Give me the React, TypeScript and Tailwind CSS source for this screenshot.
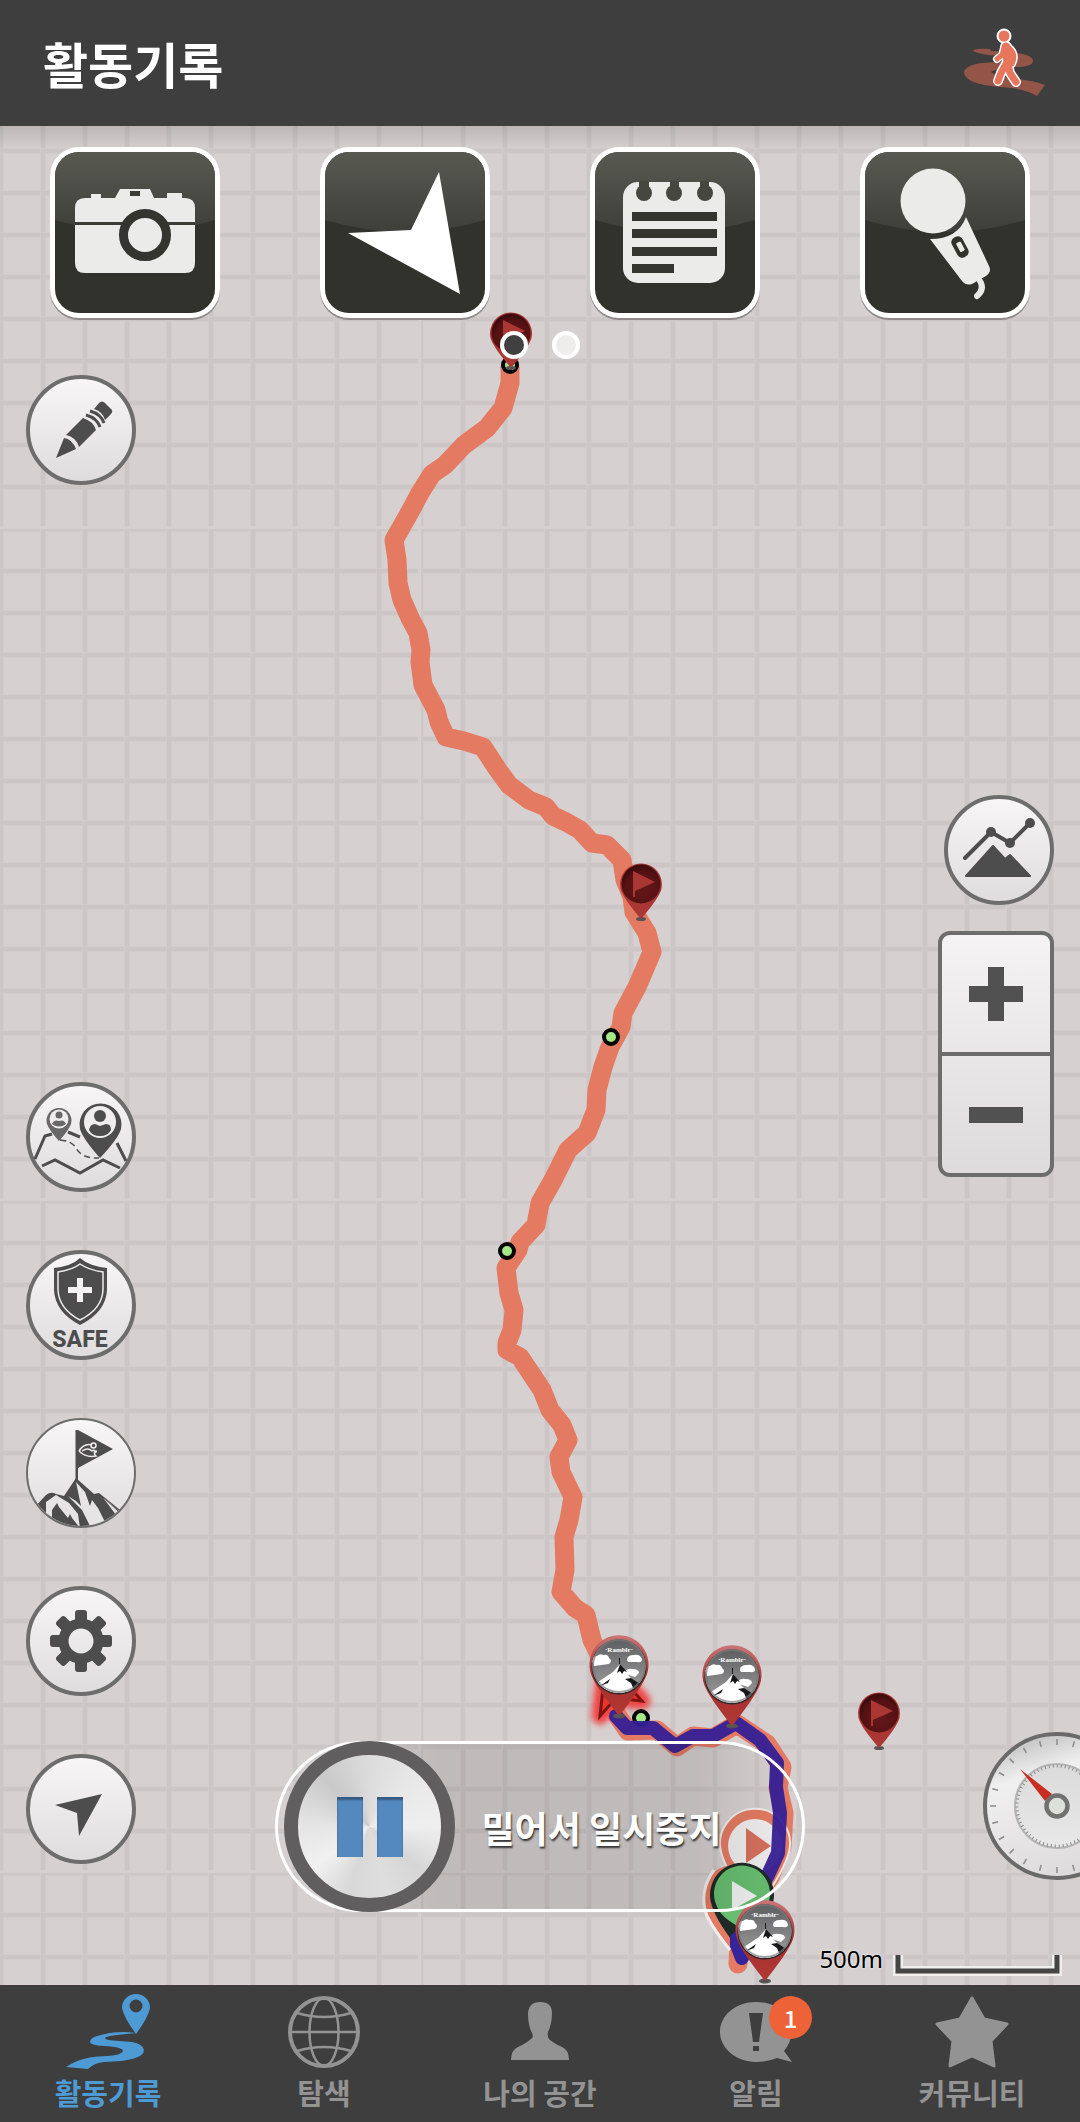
import React from "react";

const ROUTE =
  "M510 367L510 383L503 408L487 428L464 445L445 465L432 474L420 493L411 510L394 540L397 560L398 583L402 600L411 620L418 633L421 650L420 662L423 685L436 710L439 722L446 737L464 741L483 747L498 770L509 785L529 800L546 807L553 816L566 822L580 830L592 843L607 845L622 860L625 880L632 897L634 912L647 933L652 952L637 987L623 1013L621 1027L610 1047L603 1067L597 1090L596 1110L587 1133L568 1150L553 1180L540 1203L536 1225L520 1242L518 1250L506 1268L509 1293L514 1310L512 1330L507 1343L507 1350L520 1357L542 1390L550 1410L562 1425L568 1440L559 1457L561 1472L573 1497L569 1520L564 1537L565 1570L561 1592L575 1608L586 1615L592 1640L606 1668L617 1715L628 1731L657 1730L677 1747L693 1736L713 1738L737 1724L767 1744L782 1767L778 1788L784 1813L782 1847L770 1877L740 1920L738 1964";

const WALKED =
  "M616 1716L627 1728L653 1728L675 1746L693 1736L713 1736L736 1723L760 1740L777 1763L776 1787L780 1813L778 1853L767 1877L737 1925L737 1945L742 1958";

const FlagPin = ({ x, y }: { x: number; y: number }) => (
  <g transform={`translate(${x} ${y})`}>
    <ellipse cx="0" cy="35" rx="5" ry="2" fill="#555" />
    <path d="M-20.500 5A21 21 0 1 1 20.500 5Q18 14 0 35Q-18 14-20.500 5Z" fill="#aa3733" />
    <circle r="19.500" fill="url(#flagHead)" />
    <path d="M-8-13L14-2L-6 7V13H-8Z" fill="#ab3734" />
  </g>
);

const PhotoPin = ({ x, y }: { x: number; y: number }) => (
  <g transform={`translate(${x} ${y})`}>
    <ellipse cx="0" cy="50" rx="6" ry="2.500" fill="#555" />
    <path d="M-28 8A29.500 29.500 0 1 1 28 8Q24 20 0 50Q-24 20-28 8Z" fill="url(#photoBody)" />
    <circle cy="1" r="27.500" fill="#2e2526" />
    <g clipPath="url(#photoClip)">
      <circle r="27" fill="url(#photoSky)" />
      <path d="M-27-5q0-5 5-5q3-3 6-1q5-1 6 3q4 3 0 6l-15 2zM8-6q0-5 7-5q6-1 8 4q0 4-5 3h-9zM4 7q4-5 9-4q7 0 7 4l-4 4z" fill="#fff" />
      <path d="M-24 18L-6 6L1-2L8 8L14 14L28 28H-24z" fill="#fff" />
      <path d="M1-2L8 6L5 5L3 8L1 5L-2 7zM6 13L12 12L24 20L27 28H20L15 24L12 17zM-19 20L-9 13L-11 17zM0-8H1V-2H0z" fill="#16171a" />
      <circle r="26" fill="none" stroke="#777" strokeOpacity=".7" strokeWidth="2" />
    </g>
    <text y="-14" textAnchor="middle" fontSize="7" fill="#fff" className="font-['Liberation_Serif',serif] font-bold">
      ·Ramblr·
    </text>
  </g>
);

const Waypoint = ({ x, y }: { x: number; y: number }) => (
  <circle cx={x} cy={y} r="7" fill="#a4e887" stroke="#000" strokeWidth="4" />
);

const MapCanvas = () => (
  <svg
    viewBox="0 126 1080 1859"
    preserveAspectRatio="xMidYMid slice"
    className="absolute inset-0 h-full w-full"
    aria-hidden="true"
  >
    <defs>
      <pattern id="grid" x="40" y="148" width="42" height="42" patternUnits="userSpaceOnUse">
        <path d="M0 0H42V6H6V42H0z" fill="#d2cccc" />
        <path d="M1 1H42V5H5V42H1z" fill="#ccc6c6" />
      </pattern>
      <linearGradient id="topShade" x1="0" y1="0" x2="0" y2="1">
        <stop offset="0" stopColor="#000" stopOpacity=".12" />
        <stop offset="1" stopColor="#000" stopOpacity="0" />
      </linearGradient>
      <radialGradient id="flagHead" cx=".55" cy=".65" r=".65">
        <stop offset="0" stopColor="#641618" />
        <stop offset=".7" stopColor="#551213" />
        <stop offset="1" stopColor="#380a0b" />
      </radialGradient>
      <linearGradient id="photoBody" x1="0" y1="0" x2="0" y2="1">
        <stop offset="0" stopColor="#ca7575" />
        <stop offset=".5" stopColor="#a52f30" />
        <stop offset="1" stopColor="#b13934" />
      </linearGradient>
      <linearGradient id="photoSky" x1="0" y1="0" x2="0" y2="1">
        <stop offset="0" stopColor="#5d5e60" />
        <stop offset="1" stopColor="#a0a0a0" />
      </linearGradient>
      <clipPath id="photoClip">
        <circle r="27" />
      </clipPath>
      <filter id="glow" x="-50%" y="-50%" width="200%" height="200%">
        <feGaussianBlur stdDeviation="3" />
      </filter>
    </defs>
    <rect y="126" width="1080" height="1859" fill="#d6d0d0" />
    <rect y="126" width="1080" height="1859" fill="url(#grid)" />
    {/* tile seams, where the grid line is only half drawn */}
    <path d="M418 126h3v1859h-3zM0 526h1080v3H0zM0 1198h1080v3H0zM0 1870h1080v3H0z" fill="#d6d0d0" />
    <rect y="126" width="1080" height="24" fill="url(#topShade)" />

    <path d={ROUTE} fill="none" stroke="#e37a61" strokeWidth="19" strokeLinejoin="round" strokeLinecap="round" />
    <Waypoint x={510} y={365} />
    <Waypoint x={611} y={1037} />
    <Waypoint x={507} y={1251} />

    <path d="M606 1660L600 1716L616 1698L642 1701z" fill="#f04444" stroke="#f04444" strokeWidth="17" strokeLinejoin="round" filter="url(#glow)" />
    <path d="M606 1660L600 1716L616 1698L642 1701z" fill="#ea3426" stroke="#7c1512" strokeWidth="3" />
    <Waypoint x={641} y={1718} />

    <path d="M721 1852A35 35 0 1 1 789 1852Q784 1872 755 1912Q726 1872 721 1852Z" fill="#e37a61" stroke="#f0eaea" strokeWidth="2" />
    <circle cx="755" cy="1846" r="27" fill="#eeecec" />
    <path d="M746 1828L771 1846L746 1863z" fill="#d4705c" />
    <path d="M704 1895Q704 1866 742 1863L752 1940L738 1960L731 1950Q704 1920 704 1898Z" fill="#e37a61" />
    <path d="M714 1870Q698 1892 707 1916Q714 1930 730 1950" fill="none" stroke="#f3eded" strokeWidth="3" />
    <path d={WALKED} fill="none" stroke="#352096" strokeOpacity=".95" strokeWidth="14" strokeLinejoin="round" strokeLinecap="round" />
    <path d="M712 1906A32 32 0 1 1 772 1906Q766 1923 742 1953Q717 1923 712 1906Z" fill="#1e2a26" />
    <path d="M716 1904A28 28 0 1 1 768 1904Q763 1918 742 1928Q720 1918 716 1904Z" fill="#67bd70" />
    <path d="M732 1920L754 1920L742 1934z" fill="#67bd70" />
    <path d="M732 1881L757 1896L732 1910z" fill="#f0f0f0" />
    <path d="M737 1938L739 1948L742 1958" fill="none" stroke="#34259a" strokeWidth="13" strokeLinecap="round" />

    <FlagPin x={511} y={333} />
    <FlagPin x={641} y={884} />
    <FlagPin x={879} y={1713} />
    <PhotoPin x={619} y={1666} />
    <PhotoPin x={732} y={1676} />
    <PhotoPin x={765} y={1931} />
  </svg>
);

const ToolButton = ({ label, children }: { label: string; children: React.ReactNode }) => (
  <button type="button" aria-label={label} className="rounded-[26px] drop-shadow-[0_2px_0_#8f8a8a]">
    <svg viewBox="0 0 170 171" className="h-[171px] w-[170px]">
      <defs>
        <linearGradient id="gloss" x1="0" y1="0" x2="0" y2="1">
          <stop offset="0" stopColor="#585a52" />
          <stop offset="1" stopColor="#3e3f38" />
        </linearGradient>
      </defs>
      <rect width="170" height="171" rx="29" fill="#fff" />
      <rect x="5" y="5" width="160" height="161" rx="24" fill="#31322b" />
      <path d="M5 29A24 24 0 0 1 29 5H141A24 24 0 0 1 165 29V73Q85 97 5 73z" fill="url(#gloss)" />
      {children}
    </svg>
  </button>
);

const RoundButton = ({
  label,
  thin,
  children,
}: {
  label: string;
  thin?: boolean;
  children: React.ReactNode;
}) => (
  <button type="button" aria-label={label}>
    <svg viewBox="0 0 110 110" className="size-[110px]" fill="#4d4d4d">
      <defs>
        <linearGradient id="face" x1="0" y1="0" x2="0" y2="1">
          <stop offset="0" stopColor="#f8f6f7" />
          <stop offset="1" stopColor="#dedcdd" />
        </linearGradient>
        <clipPath id="faceClip">
          <circle cx="55" cy="55" r="53" />
        </clipPath>
      </defs>
      <circle cx="55" cy="55" r={thin ? 54 : 53} fill="url(#face)" stroke="#6e6d6d" strokeWidth={thin ? 2 : 4} />
      {children}
    </svg>
  </button>
);

const Gauge = () => (
  <svg viewBox="0 0 148 148" className="size-[148px]" aria-label="나침반">
    <defs>
      <linearGradient id="dial" x1=".2" y1="0" x2=".5" y2="1">
        <stop offset="0" stopColor="#bcbbbc" />
        <stop offset=".3" stopColor="#f1f0f1" />
        <stop offset="1" stopColor="#dddbdc" />
      </linearGradient>
      <linearGradient id="innerDial" x1="0" y1="0" x2="0" y2="1">
        <stop offset="0" stopColor="#dcdbdc" />
        <stop offset="1" stopColor="#e9e8e8" />
      </linearGradient>
    </defs>
    <circle cx="74" cy="74" r="72" fill="url(#dial)" stroke="#6a6a6a" strokeWidth="4" />
    {Array.from({ length: 24 }, (_, i) => (
      <path key={i} d="M74 7V13" stroke="#8c8c8c" strokeWidth="1.500" transform={`rotate(${i * 15} 74 74)`} />
    ))}
    <circle cx="74" cy="74" r="42" fill="url(#innerDial)" stroke="#b5b5b5" strokeWidth="2" />
    <circle cx="74" cy="74" r="40" fill="none" stroke="#888" strokeWidth="3" strokeDasharray="1 3" />
    <path d="M37 37L69 62L62 69z" fill="#c92c20" />
    <circle cx="74" cy="74" r="10.500" fill="#dde0da" stroke="#707170" strokeWidth="4.500" />
  </svg>
);

const NavItem = ({
  label,
  active,
  badge,
  children,
}: {
  label: string;
  active?: boolean;
  badge?: number;
  children: React.ReactNode;
}) => (
  <a
    href="#"
    aria-current={active ? "page" : undefined}
    className={`flex flex-col items-center pt-2 pb-[11px] ${active ? "text-[#4d9ad5]" : "text-[#939393]"}`}
  >
    <span className="relative">
      <svg viewBox="0 0 84 80" className="h-20 w-[84px]" fill="currentColor">
        {children}
      </svg>
      {badge ? (
        <span className="absolute top-[3px] -right-[14px] flex size-[43px] items-center justify-center rounded-full bg-[#ed6337] text-2xl font-medium text-white">
          {badge}
        </span>
      ) : null}
    </span>
    <span className="text-[29px] leading-[38px] font-bold">{label}</span>
  </a>
);

const App = () => {
  return (
    <div className="flex min-h-screen flex-col bg-[#3e3e3e] font-['Noto_Sans_CJK_KR',sans-serif]">
      <header className="flex h-[126px] items-center justify-between bg-[#3e3e3e] pr-[35px] pb-[2px] pl-[43px]">
        <h1 className="text-[49px] leading-none font-bold text-white">활동기록</h1>
        <button type="button" aria-label="걷기">
          <svg viewBox="0 0 81 70" className="h-[70px] w-[81px]" fill="none" strokeLinecap="round" strokeLinejoin="round">
            <path
              d="M9 23Q15 21 26 22L27 24Q69 25 69 34Q68 40 52 40Q32 41 27 45Q32 49 45 51Q68 53 81 58L73 69Q60 61 36 60Q0 57 0 45Q2 35 36 35Q45 34 36 29Q10 27 9 23Z"
              fill="#925548"
            />
            <g stroke="#fff">
              <circle cx="40" cy="9" r="6" strokeWidth="3" />
              <path d="M42 20L44 36" strokeWidth="12" />
              <path d="M44 20Q53 27 48 37" strokeWidth="8" />
              <path d="M40 21L38 28L33 32" strokeWidth="8" />
              <path d="M42 37L37 46L34 54M44 37L46 46L52 55" strokeWidth="10" />
            </g>
            <g stroke="#e8765c">
              <circle cx="40" cy="9" r="5.500" fill="#e8765c" stroke="none" />
              <path d="M42 20L44 36" strokeWidth="9" />
              <path d="M44 20Q53 27 48 37" strokeWidth="5" />
              <path d="M40 21L38 28L33 32" strokeWidth="5" />
              <path d="M42 37L37 46L34 54M44 37L46 46L52 55" strokeWidth="7" />
            </g>
          </svg>
        </button>
      </header>

      <main className="relative flex flex-1 flex-col overflow-hidden">
        <MapCanvas />

        <div className="relative grid grid-cols-4 justify-items-center pt-[21px]">
          <ToolButton label="사진">
            <path
              d="M25 61Q25 51 35 51H41V47H51V51H65L70 42H100L104 51H117V46H132V51H135Q145 51 145 61V116Q145 126 135 126H35Q25 126 25 116z"
              fill="#ebebea"
            />
            <path d="M80 44H90V49H80zM25 75H145V78H25z" fill="#3b3c35" />
            <circle cx="95" cy="88" r="21.500" fill="#ebebea" stroke="#34352e" strokeWidth="9" />
          </ToolButton>
          <ToolButton label="위치">
            <path d="M119 25L140 147L28 86L91 83z" fill="#fff" />
          </ToolButton>
          <ToolButton label="메모">
            <rect x="33" y="35" width="102" height="101" rx="15" fill="#ebebea" />
            <g fill="#46473f">
              <path d="M49 34h10v8H49zM80 34h9v8h-9zM110 34h9v8h-9z" />
              <circle cx="54" cy="46" r="8" />
              <circle cx="84" cy="46" r="8" />
              <circle cx="115" cy="46" r="8" />
            </g>
            <path d="M42 65h85v9H42zM42 82h85v9H42zM42 100h85v9H42zM42 117h42v9H42z" fill="#34352e" />
          </ToolButton>
          <ToolButton label="음성">
            <circle cx="73" cy="54" r="32.500" fill="#ebebea" />
            <path d="M106 70L129 119Q132 125 126 129L112 137Q106 139 102 134L70 92Q98 92 106 70z" fill="#ebebea" />
            <rect x="-6" y="-11" width="12" height="22" rx="5" fill="#31322b" transform="translate(100 100) rotate(-28)" />
            <rect x="-2" y="-5" width="5" height="10" rx="1" fill="#ebebea" transform="translate(100 100) rotate(-28)" />
            <path d="M120 134Q125 142 117 149" fill="none" stroke="#ebebea" strokeWidth="6" strokeLinecap="round" />
          </ToolButton>
        </div>

        <div className="relative mt-[13px] flex justify-center gap-6">
          <button type="button" aria-label="1 페이지" className="size-7 rounded-full border-4 border-white bg-[#404040]" />
          <button type="button" aria-label="2 페이지" className="size-7 rounded-full border-4 border-white bg-[#eeedec]" />
        </div>

        <div className="relative grid flex-1 grid-cols-[1fr_auto_1fr]">
          <div className="flex flex-col items-start justify-between pt-4 pb-[121px] pl-[26px]">
            <RoundButton label="그리기">
              <path d="M30 83L38 63Q46 64 50 74zM40 60L57 43Q67 46 70 55L53 72Q50 62 40 60zM68 34L73 28Q76 25 79 28L86 35Q87 37 85 39L79 45Q77 37 68 34z" />
              <path d="M60 40Q71 43 74 52M64 36Q75 39 78 48" fill="none" stroke="#4d4d4d" strokeWidth="3" />
            </RoundButton>
            <div className="flex flex-col gap-[58px]">
              <RoundButton label="주변 사용자">
                <g fill="none" stroke="#4d4d4d" strokeWidth="3">
                  <path d="M9 77L19 54L26 52M42 50L54 55M91 61L100 79M16 84L29 78L54 91L77 78L94 86" />
                  <path d="M34 58Q46 59 50 66Q56 77 73 76" strokeWidth="1.500" strokeDasharray="6 4" />
                </g>
                <path d="M21 42A12.500 12.500 0 1 1 45 42Q43 48 33 59Q23 48 21 42z" fill="#686868" />
                <circle cx="33" cy="37" r="9.500" fill="#efedee" />
                <circle cx="33" cy="33" r="3.500" fill="#686868" />
                <path d="M26 42Q28 37 33 39Q38 37 40 42Q33 47 26 42z" fill="#686868" />
                <path d="M54 47A21 21 0 1 1 95 47Q92 57 74 76Q57 57 54 47z" />
                <circle cx="74" cy="40" r="16" fill="#efedee" />
                <circle cx="74" cy="34" r="6" />
                <path d="M63 48Q64 42 69 42L74 44L80 42Q85 42 85 48Q82 54 74 54Q66 54 63 48z" />
              </RoundButton>
              <RoundButton label="안전">
                <path d="M54 8Q63 16 81 18V40Q80 62 54 75Q29 62 28 40V18Q46 16 54 8z" />
                <path d="M54 14Q63 20 77 22V40Q76 59 54 70Q33 59 32 40V22Q46 20 54 14z" fill="none" stroke="#efedee" strokeWidth="1.500" />
                <path d="M51 28H57V37H66V43H57V52H51V43H42V37H51z" fill="#f3f1f2" />
                <text x="54" y="97" textAnchor="middle" fontSize="23" className="font-['Roboto',sans-serif] font-extrabold">
                  SAFE
                </text>
              </RoundButton>
              <RoundButton label="정상 인증" thin>
                <path d="M50 12L52 12L87 31L52 50V62H49.500V12z" />
                <path d="M53 33Q58 25 66 27M53 33Q60 40 70 38Q66 34 71 33M56 33Q62 29 66 33Q69 31 70 35" fill="none" stroke="#efedee" strokeWidth="1.500" />
                <circle cx="67.500" cy="27.500" r="2.500" fill="none" stroke="#efedee" strokeWidth="1.500" />
                <g clipPath="url(#faceClip)">
                  <path d="M8 90L20 77Q25 73 30 76L38 78L50 60L68 76L73 75L104 100L80 112H24z" />
                  <path d="M20 84L30 77L43 85L52 96L54 110L46 100L44 96L42 100L33 89L31 85L26 92L26 99L20 96zM50 64L59 74L64 88L66 82L72 90L80 106L66 112L56 92L42 78L50 83L55 88z" fill="#e6e4e5" />
                  <path d="M76 78L94 94L90 97z" fill="#e6e4e5" />
                  <path d="M76 78L92 93" stroke="#4d4d4d" />
                </g>
              </RoundButton>
              <RoundButton label="설정">
                <circle cx="55" cy="55" r="17.500" fill="none" stroke="#4d4d4d" strokeWidth="10" />
                {[0, 45, 90, 135, 180, 225, 270, 315].map((deg) => (
                  <rect key={deg} x="49" y="24" width="12" height="16" rx="3" transform={`rotate(${deg} 55 55)`} />
                ))}
              </RoundButton>
              <RoundButton label="내 위치">
                <path d="M76 40L53 82L51 59L29 51z" />
              </RoundButton>
            </div>
          </div>

          <div className="flex items-end pb-[73px]">
            <button
              type="button"
              className="flex h-[171px] items-center rounded-full border-3 border-white bg-[linear-gradient(to_right,transparent_15%,rgba(0,0,0,0.1)_30%,rgba(0,0,0,0.1)_80%,transparent_98%)] pr-20 pl-[6px]"
            >
              <span className="flex size-[171px] items-center justify-center gap-[14px] rounded-full border-14 border-[#605e5e] bg-[conic-gradient(#dcdcdc,#e8e8e8_12%,#efefef_25%,#d6d6d6_36%,#dedede_46%,#d8d8d8_55%,#f1f1f1_65%,#e4e4e4_76%,#c9c9c9_88%,#dcdcdc)]">
                <span className="h-[60px] w-[26px] bg-[#5389bf] shadow-[inset_0_3px_2px_#355a80]" />
                <span className="h-[60px] w-[26px] bg-[#5389bf] shadow-[inset_0_3px_2px_#355a80]" />
              </span>
              <span className="ml-[26px] text-4xl font-bold whitespace-nowrap text-white [text-shadow:1px_2px_2px_#333]">
                밀어서 일시중지
              </span>
            </button>
          </div>

          <div className="flex flex-col items-end justify-end pb-2">
            <div className="mr-[26px] flex flex-col items-end gap-[26px]">
              <RoundButton label="고도 그래프">
                <path d="M21 63L47 37L66 48L86 28" fill="none" stroke="#4d4d4d" strokeWidth="4" strokeLinecap="round" />
                <circle cx="47" cy="37" r="5" />
                <circle cx="66" cy="48" r="5" />
                <circle cx="86" cy="28" r="5" />
                <path d="M22 81L49 51L61 64L66 60L86 81z" stroke="#4d4d4d" strokeWidth="2" strokeLinejoin="round" />
              </RoundButton>
              <div className="flex w-[116px] flex-col divide-y-4 divide-[#6e6d6d] rounded-xl border-4 border-[#6e6d6d] bg-linear-to-b from-[#f5f3f4] to-[#dddbdc]">
                <button type="button" aria-label="확대" className="flex h-[121px] items-center justify-center">
                  <svg viewBox="0 0 54 54" className="size-[54px]" fill="#515151">
                    <path d="M19 0H35V19H54V35H35V54H19V35H0V19H19z" />
                  </svg>
                </button>
                <button type="button" aria-label="축소" className="flex h-[117px] items-center justify-center">
                  <svg viewBox="0 0 54 54" className="size-[54px]" fill="#515151">
                    <path d="M0 19H54V35H0z" />
                  </svg>
                </button>
              </div>
            </div>
            <div className="mt-[555px] -mr-[51px]">
              <Gauge />
            </div>
            <div className="mt-[61px] mr-[17px] flex items-end gap-[9px]">
              <span className="font-['Noto_Sans',sans-serif] text-2xl leading-9 text-black [text-shadow:0_0_3px_#fff]">
                500m
              </span>
              <svg viewBox="0 0 171 26" className="h-[26px] w-[171px]" fill="none">
                <path d="M6 4V20H165V4" stroke="#f1eeee" strokeWidth="10" />
                <path d="M6 4V20H165V4" stroke="#454545" strokeWidth="5" />
              </svg>
            </div>
          </div>
        </div>
      </main>

      <nav className="grid grid-cols-5 bg-[#3e3e3e]">
        <NavItem label="활동기록" active>
          <path
            d="M56 15A14 14 0 1 1 84 15Q82 25 70 41Q58 25 56 15zM70 6.500A6.500 6.500 0 1 0 70 19.500A6.500 6.500 0 1 0 70 6.500z"
            fillRule="evenodd"
          />
          <path d="M0 74L22 76Q28 70 38 69Q78 68 78 57Q77 51 66 49Q52 48 42 47Q33 44 51 42L70 40Q52 37 35 42Q24 44 24 49Q24 52 38 53Q57 54 57 58Q56 62 42 63Q16 63 0 74z" />
        </NavItem>
        <NavItem label="탐색">
          <g fill="none" stroke="currentColor" strokeWidth="2.500">
            <circle cx="42" cy="39" r="34" strokeWidth="4" />
            <ellipse cx="42" cy="39" rx="14.500" ry="34" />
            <path d="M8 39H76M15 20Q42 28 69 20M15 58Q42 50 69 58" />
          </g>
        </NavItem>
        <NavItem label="나의 공간">
          <path d="M13 67Q13 57 20 54Q29 50 34 45Q36 43 33 38Q30 31 30 20Q31 9 42 9Q54 9 54 20Q54 31 50 39Q49 43 51 46Q55 50 64 54Q71 57 71 67z" />
        </NavItem>
        <NavItem label="알림" badge={1}>
          <path d="M42 9C62 9 78 21 78 38Q77 50 70 58L78 69L63 65Q54 69 42 69C22 69 6 55 6 39C6 22 22 9 42 9z" />
          <path d="M35 20H49L45 49H39zM39 53H45V58H39z" fill="#3e3e3e" />
        </NavItem>
        <NavItem label="커뮤니티">
          <path
            d="M42 5L54 26L77 31L61 48L64 73L42 63L20 73L23 48L7 31L30 26z"
            stroke="currentColor"
            strokeWidth="3"
            strokeLinejoin="round"
          />
        </NavItem>
      </nav>
    </div>
  );
};

export default App;
